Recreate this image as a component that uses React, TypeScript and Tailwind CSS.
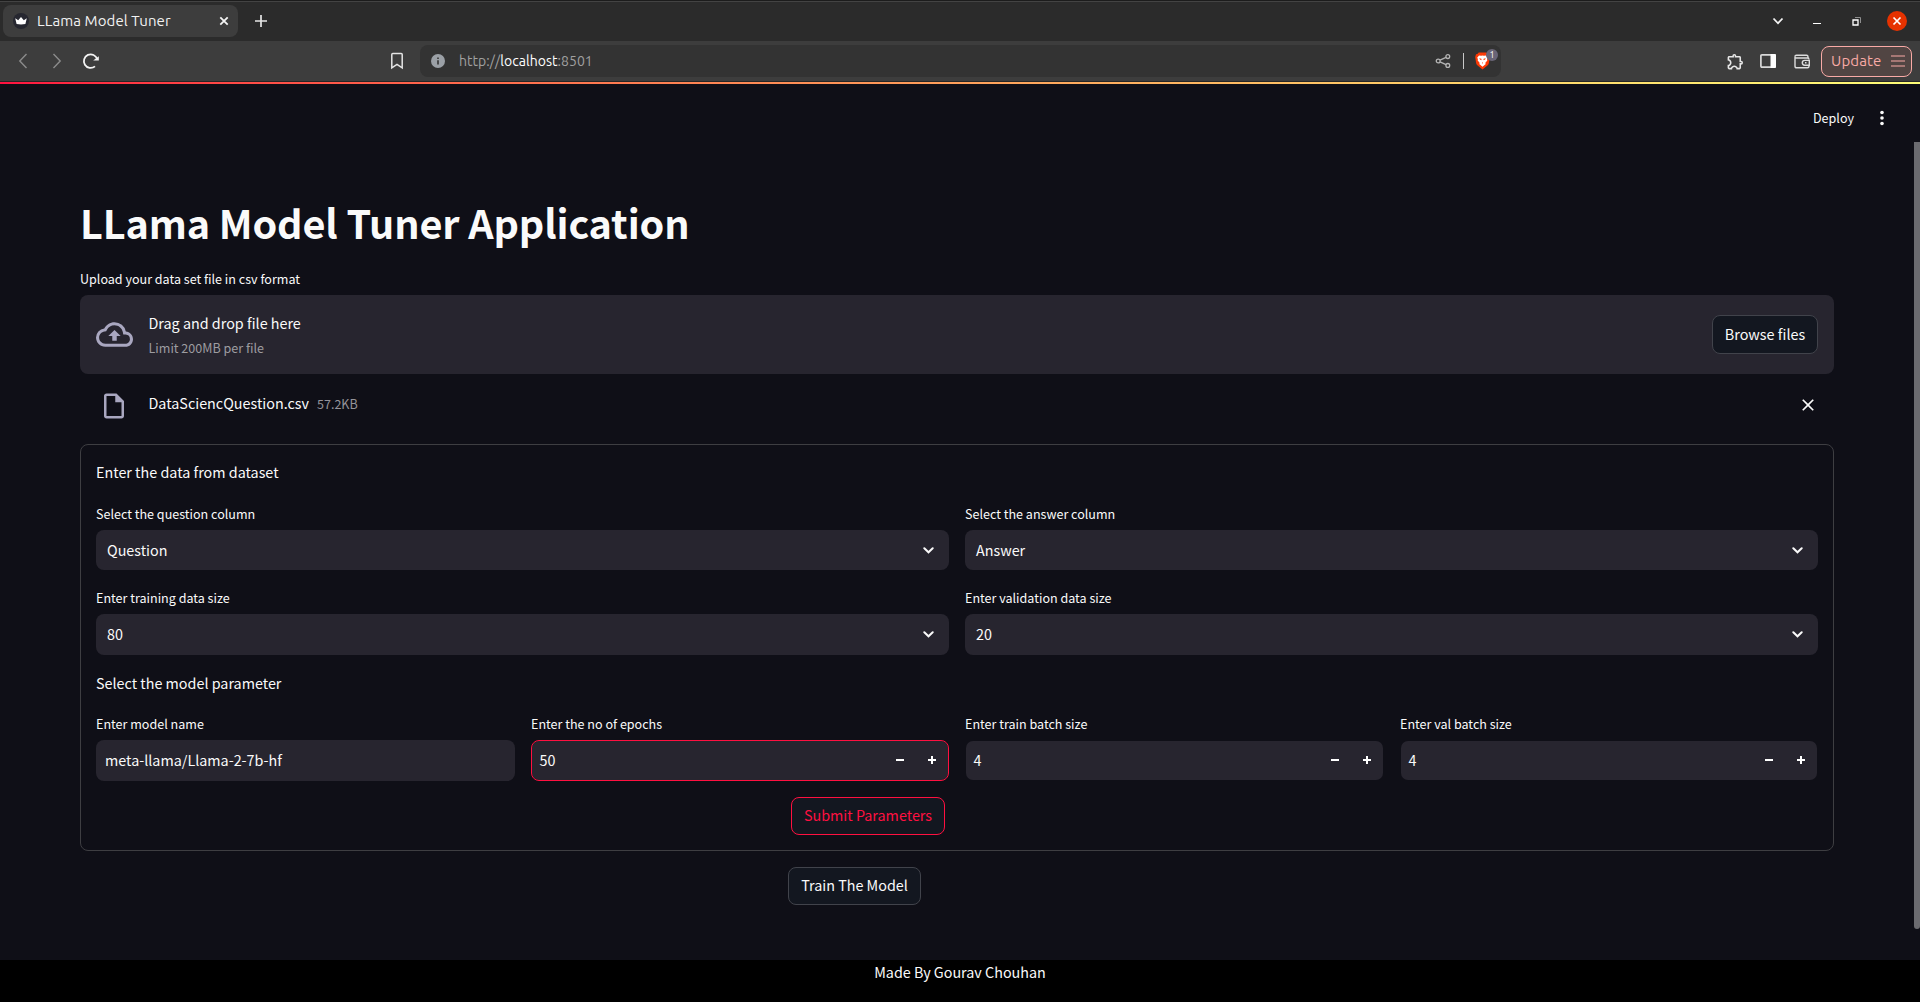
import React from "react";
import {
  MdClear,
  MdOutlineCloudUpload,
  MdOutlineExtension,
  MdOutlineInsertDriveFile,
} from "react-icons/md";

const APP_FONT = "font-['Source_Sans_Pro','Noto_Sans_CJK_SC',sans-serif]";
const CHROME_FONT = "font-['Ubuntu','Noto_Sans',sans-serif]";

function TabStrip() {
  return (
    <div className="flex h-[41px] items-center border-t border-[#1c1c1c] bg-[#2b2b2b] pl-[3px] pr-[13px] shadow-[inset_0_1px_0_#434343]">
      <div className="flex h-8 w-[235px] items-center rounded-lg bg-[#3d3d3d] pl-[10px] pr-2">
        <svg className="size-4" viewBox="0 0 16 16">
          <circle cx="8" cy="8" r="8" fill="#262730" />
          <path d="M2.2 5.2 5.2 7.2 8 4l2.8 3.2 3-2L12.4 11q-4.4.8-8.8 0Z" fill="#fff" />
        </svg>
        <span className="-mt-px ml-2 flex-1 whitespace-nowrap text-[15px] leading-5 tracking-[0.08px] text-[#f2f2f2]">LLama Model Tuner</span>
        <svg className="size-3" viewBox="0 0 12 12" stroke="#f4f4f4" strokeWidth="1.8">
          <path d="m2.3 2.3 7.4 7.4M9.7 2.3 2.3 9.7" />
        </svg>
      </div>
      <svg className="ml-[17px] size-3" viewBox="0 0 12 12" stroke="#e6e6e6" strokeWidth="1.7">
        <path d="M6 0v12M0 6h12" />
      </svg>
      <div className="ml-auto flex items-center">
        <svg className="h-3 w-3" viewBox="0 0 12 12" fill="none" stroke="#f4f4f4" strokeWidth="1.8">
          <path d="m1.5 3.5 4.5 4.8 4.5-4.8" />
        </svg>
        <svg className="ml-[27px] h-3 w-3" viewBox="0 0 12 12">
          <path d="M2 8h8v1H2z" fill="#fff" />
        </svg>
        <svg className="ml-[28px] h-3 w-3" viewBox="0 0 12 12" fill="none">
          <path d="M4 2.500h5.500V8" stroke="#8e8e8e" />
          <path d="M2 5h5v5H2z" stroke="#fff" strokeWidth="1.300" />
        </svg>
        <svg className="ml-[24px] size-5" viewBox="0 0 20 20">
          <circle cx="10" cy="10" r="10" fill="#e63200" />
          <path d="m6.500 6.500 7 7m0-7-7 7" stroke="#fff" strokeWidth="1.700" />
        </svg>
      </div>
    </div>
  );
}

function BraveShield() {
  return (
    <div className="relative ml-[11px] h-[18px] w-[15px]">
      <svg className="h-[18px] w-[15px]" viewBox="0 0 16 18">
        <path d="M4 0h8l1.5 1.6 1.4.2.9 3-1 6.4q-.3 1.6-1.6 2.7L8 18l-5.2-4.1q-1.3-1.1-1.6-2.7l-1-6.4.9-3 1.4-.2Z" fill="#fb3a06" />
        <path d="m4.3 3 2.200.4L8 3l1.500.4 2.200-.4 2 2.600-.8 1.200.2 1.600-2.200 2.600.6 1.200L8 15l-3.500-2.800.6-1.200L2.900 8.400l.2-1.600-.8-1.200Z" fill="#fff" />
        <path d="m4.500 6 2.300.5L7 8.200l-1.800-.7ZM11.500 6l-2.300.5L9 8.200l1.800-.7ZM8 10l.5 1L8 11.800 7.500 11Z" fill="#fb3a06" />
      </svg>
      <span className="absolute -top-[3px] left-[11px] flex h-3 w-3 items-center justify-center rounded-full bg-[#696577] text-[9px] leading-none text-white">1</span>
    </div>
  );
}

function Toolbar() {
  return (
    <div className="flex h-[41px] items-center border-b border-[#262626] bg-[#3d3d3d] pr-2">
      <svg className="ml-[18px] h-4 w-[10px]" viewBox="0 0 10 16" fill="none" stroke="#8b8b8b" strokeWidth="1.4">
        <path d="M8.500 1 1.800 8l6.700 7" />
      </svg>
      <svg className="ml-[24px] h-4 w-[10px]" viewBox="0 0 10 16" fill="none" stroke="#8b8b8b" strokeWidth="1.4">
        <path d="m1.500 1 6.700 7-6.700 7" />
      </svg>
      <svg className="ml-[20px] size-[18px]" viewBox="0 0 18 18" fill="none" stroke="#f4f4f4" strokeWidth="1.8">
        <path d="M13 14.400A6.800 6.800 0 1 1 15.200 7.200" />
        <path d="M11.200 8.600h5.600V4.200Z" fill="#f4f4f4" stroke="none" />
      </svg>
      <svg className="ml-[290px] h-[18px] w-[14px]" viewBox="0 0 14 18" fill="none" stroke="#e4e4e4" strokeWidth="1.500">
        <path d="M1.800 2.500q0-1 1-1h8.400q1 0 1 1v13.300L7 12.300l-5.200 3.500Z" />
      </svg>
      <div className="ml-[16px] flex h-8 w-[1081px] items-center rounded-lg bg-[#333333] pl-[11px]">
        <svg className="size-[14px]" viewBox="0 0 14 14">
          <circle cx="7" cy="7" r="7" fill="#9ba0a6" />
          <path d="M6.200 6.200h1.600v4.300H6.200zM6.200 3.400h1.600V5H6.200z" fill="#333" />
        </svg>
        <span className="ml-[14px] whitespace-nowrap text-[14px] leading-5 tracking-[0.04px] text-[#a0a0a0]">
          http://<span className="text-white">localhost</span>:8501
        </span>
        <svg className="ml-auto h-[14px] w-4" viewBox="0 0 16 14" fill="none" stroke="#b4b4b4" strokeWidth="1.300">
          <circle cx="3.200" cy="7" r="1.900" />
          <circle cx="12.800" cy="2.600" r="1.900" />
          <circle cx="12.800" cy="11.400" r="1.900" />
          <path d="m5 6.200 6-2.800M5 7.800l6 2.800" />
        </svg>
        <div className="ml-[12px] h-4 w-px bg-[#c8c8c8]" />
        <BraveShield />
        <div className="w-[11px]" />
      </div>
      <MdOutlineExtension className="ml-auto size-[19px] text-[#e6e6e6]" />
      <svg className="ml-[15px] h-[14px] w-4" viewBox="0 0 16 14">
        <rect x="0.900" y="0.900" width="14.200" height="12.200" rx="1" fill="none" stroke="#d8d8d8" strokeWidth="1.700" />
        <path d="M10.500 0H15a1 1 0 0 1 1 1v12a1 1 0 0 1-1 1h-4.500Z" fill="#fff" />
      </svg>
      <svg className="ml-[18px] h-[15px] w-4" viewBox="0 0 16 15" fill="none" stroke="#dcdcdc" strokeWidth="1.400">
        <path d="M1 2.700q0-1.500 1.500-1.500h10Q14 1.200 14 2.700V4" />
        <path d="M1 2.700Q1 4 2.500 4H13.500Q15 4 15 5.500M15 11.500v.8q0 1.500-1.500 1.500h-11Q1 13.800 1 12.300V2.700" />
        <path d="M15.300 6.400H10.700a2.400 2.400 0 0 0 0 4.800h4.600Z" />
        <path d="M11 8.800h1.500" />
      </svg>
      <div className="ml-[11px] flex h-[31px] w-[91px] items-center rounded-lg border border-[#f9aaa6] bg-[#514543] pl-[9px] text-[#f9aaa6]">
        <span className="w-[51px] text-[15px] leading-5 tracking-[0.15px]">Update</span>
        <svg className="ml-[9px] h-3 w-[14px]" viewBox="0 0 14 12" stroke="currentColor" strokeWidth="1.200">
          <path d="M0 1h14M0 6h14M0 11h14" />
        </svg>
      </div>
    </div>
  );
}

function Label({ children }: { children: React.ReactNode }) {
  return <div className="h-[21px] whitespace-nowrap text-[12.55px] leading-[21px]">{children}</div>;
}

function SelectBox({ label, value, className }: { label: string; value: string; className: string }) {
  return (
    <div className="flex-1">
      <Label>{label}</Label>
      <div className={`mt-[6px] flex items-start justify-between rounded-lg bg-[#27252f] pl-[11px] pr-[15.5px] ${className}`}>
        <span className="mt-[9px] text-[14.35px] leading-[22px]">{value}</span>
        <svg className="mt-[16.5px] h-[7px] w-[11px]" viewBox="0 0 11 7" fill="none" stroke="#fafafa" strokeWidth="2" strokeLinecap="round">
          <path d="m1.300 1.300 4.200 4 4.200-4" />
        </svg>
      </div>
    </div>
  );
}

function TextField({ label, value }: { label: string; value: string }) {
  return (
    <div className="w-[419px]">
      <Label>{label}</Label>
      <div className="mt-[6px] flex h-[41px] rounded-lg bg-[#27252f] pl-[9px] pt-[9px] text-[14.35px] leading-[22px]">{value}</div>
    </div>
  );
}

function NumberField({ label, value, active = false, className }: { label: string; value: string; active?: boolean; className: string }) {
  return (
    <div className={className}>
      <Label>{label}</Label>
      <div
        className={`mt-[6px] flex h-[41px] items-start rounded-lg border bg-[#27252f] bg-clip-padding pl-[7.5px] pr-3 ${active ? "border-[#ff1040]" : "border-transparent"}`}
      >
        <span className="mt-2 text-[14.35px] leading-[22px]">{value}</span>
        <div className="ml-auto mt-[15px] flex gap-6">
          <svg className="size-2" viewBox="0 0 8 8"><path d="M0 3h8v2H0z" fill="#fff" /></svg>
          <svg className="size-2" viewBox="0 0 8 8"><path d="M3 0h2v3h3v2H5v3H3V5H0V3h3z" fill="#fff" /></svg>
        </div>
      </div>
    </div>
  );
}

function Uploader() {
  return (
    <div>
      <Label>Upload your data set file in csv format</Label>
      <div className="mt-[6px] flex h-[79px] items-center rounded-lg bg-[#27252f] px-4">
        <MdOutlineCloudUpload className="size-[37px] text-[#a9a7c0]" />
        <div className="ml-[15.5px] pt-px">
          <div className="text-[14.35px] leading-6">Drag and drop file here</div>
          <div className="text-[12.55px] leading-[25px] text-[#9d9ca0]">Limit 200MB per file</div>
        </div>
        <button className="ml-auto h-[39px] w-[106px] rounded-lg border border-[#41434b] bg-[#131720] pb-[2px] text-[14.4px] leading-[22px]">Browse files</button>
      </div>
      <div className="mt-4 flex h-[30px] items-center pl-[19px] pr-4">
        <MdOutlineInsertDriveFile className="mt-px size-[30px] text-[#a9a7c0]" />
        <span className="-mt-[5px] ml-[19.5px] text-[14.35px] leading-[22px]">DataSciencQuestion.csv</span>
        <span className="-mt-1 ml-2 text-[12.55px] leading-[21px] text-[#95949a]">57.2KB</span>
        <MdClear className="ml-auto size-5" />
      </div>
    </div>
  );
}

function ParameterForm() {
  return (
    <div className="mt-6 h-[407px] rounded-lg border border-[#3e3e42] p-[15px]">
      <p className="text-[14.35px] leading-6">Enter the data from dataset</p>
      <div className="mt-[19px] flex gap-4">
        <SelectBox label="Select the question column" value="Question" className="h-10" />
        <SelectBox label="Select the answer column" value="Answer" className="h-10" />
      </div>
      <div className="mt-[17px] flex gap-4">
        <SelectBox label="Enter training data size" value="80" className="h-[41px]" />
        <SelectBox label="Enter validation data size" value="20" className="h-[41px]" />
      </div>
      <p className="mt-4 text-[14.35px] leading-6">Select the model parameter</p>
      <div className="mt-[18px] flex justify-between">
        <TextField label="Enter model name" value="meta-llama/Llama-2-7b-hf" />
        <NumberField label="Enter the no of epochs" value="50" active className="w-[418px]" />
        <NumberField label="Enter train batch size" value="4" className="w-[419px]" />
        <NumberField label="Enter val batch size" value="4" className="w-[418px]" />
      </div>
      <button className="ml-[695px] mt-4 block h-[38px] w-[154px] rounded-lg border border-[#ff1040] bg-[#131720] pb-[2px] text-[14.35px] leading-[22px] text-[#ff1040]">Submit Parameters</button>
    </div>
  );
}

export default function App() {
  return (
    <div className="flex h-[1002px] w-[1920px] flex-col overflow-hidden bg-[#0f0f17]">
      <header className={CHROME_FONT}>
        <TabStrip />
        <Toolbar />
        <div className="h-[2px] bg-gradient-to-r from-[#ff1040] to-[#fdfd78]" />
      </header>
      <div className={`relative flex h-[876px] flex-col text-[#fafafa] ${APP_FONT}`}>
        <div className="flex h-[58px] items-end justify-end pb-[14px] pr-[36px]">
          <span className="text-[12.55px] leading-5">Deploy</span>
          <svg className="ml-[26px] h-5 w-1" viewBox="0 0 4 20" fill="#fafafa">
            <circle cx="2" cy="4.500" r="1.800" />
            <circle cx="2" cy="10" r="1.800" />
            <circle cx="2" cy="15.500" r="1.800" />
          </svg>
        </div>
        <div className="absolute right-0 top-[58px] h-[787px] w-[6px] rounded-b-full bg-[#6b6b70]" />
        <main className="w-[1834px] pl-20 pt-[53px]">
          <h1 className="whitespace-nowrap text-[39.6px] font-bold leading-[53px] tracking-[-0.14px]">LLama Model Tuner Application</h1>
          <div className="mt-5">
            <Uploader />
          </div>
          <ParameterForm />
          <button className="ml-[708px] mt-4 block h-[38px] w-[133px] rounded-lg border border-[#41434b] bg-[#131720] pb-[2px] text-[14.35px] leading-[22px]">Train The Model</button>
        </main>
      </div>
      <footer className={`flex-1 bg-black text-center text-[14.35px] leading-6 text-[#fafafa] ${APP_FONT}`}>Made By Gourav Chouhan</footer>
    </div>
  );
}
